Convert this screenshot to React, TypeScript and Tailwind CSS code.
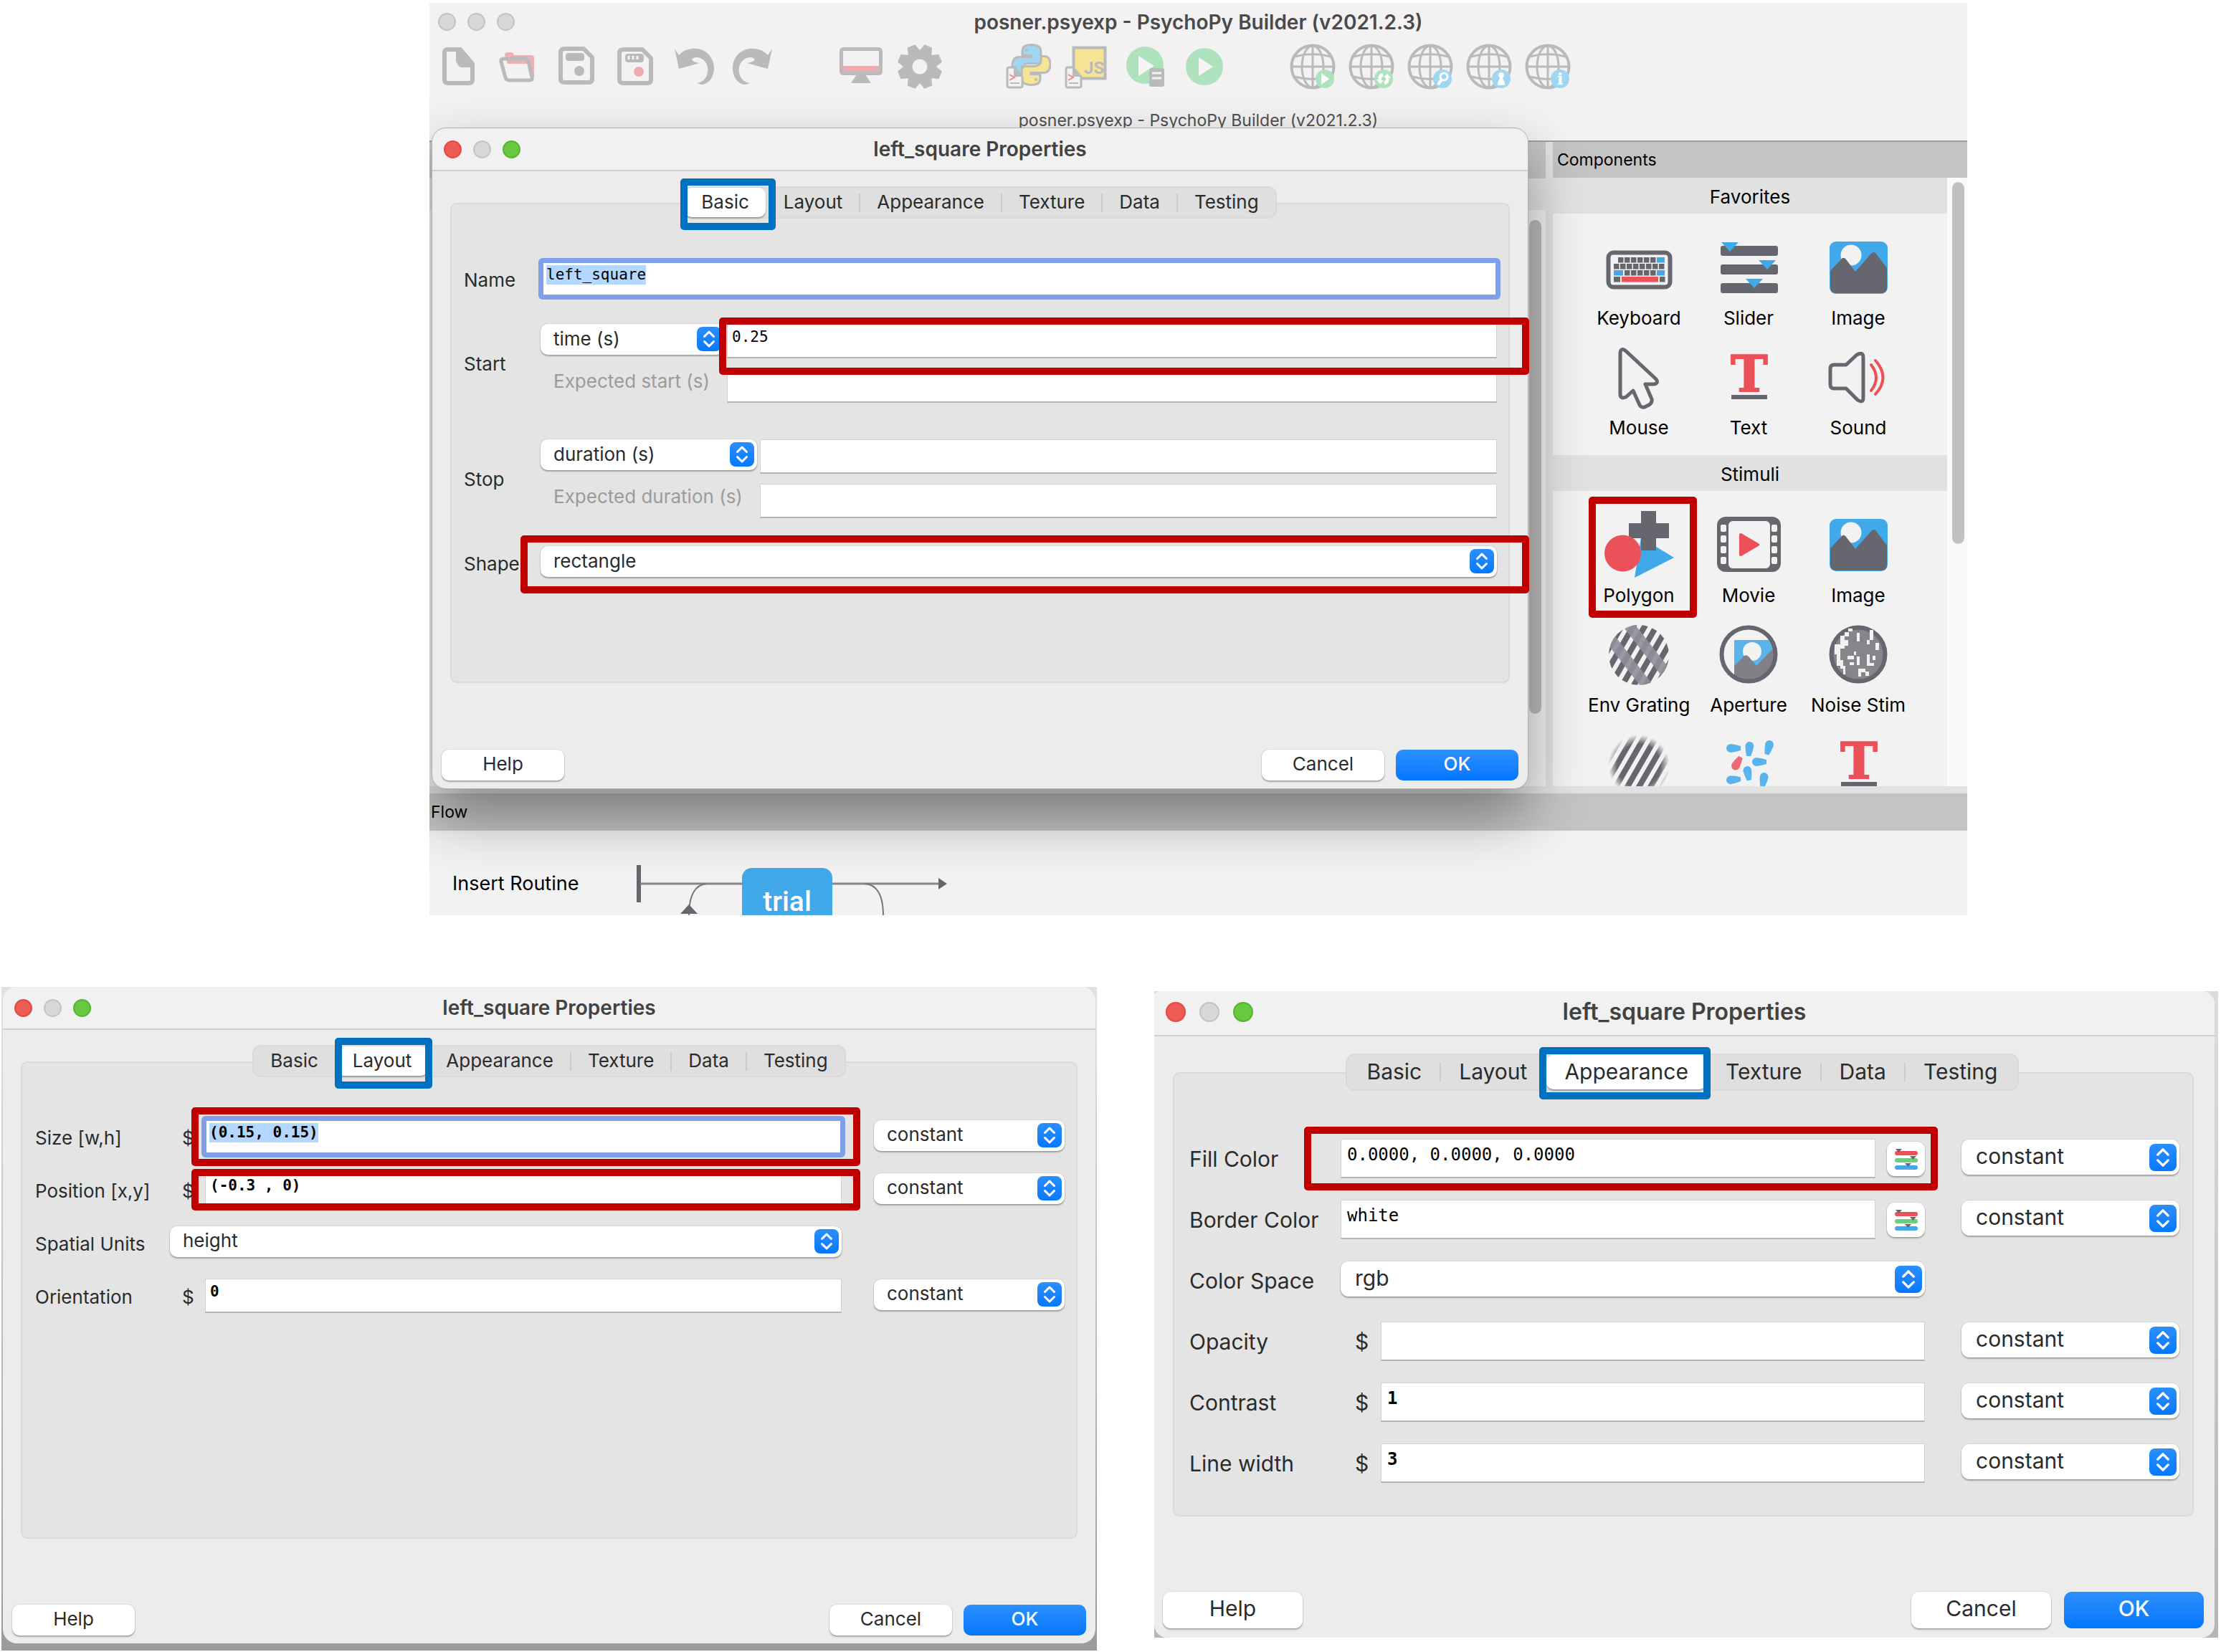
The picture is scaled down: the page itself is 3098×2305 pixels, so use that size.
import type { ReactNode } from "react";

const GREY = "#b9babc";
const INK = "#66666e";
const RED = "#ec5159";
const BLUE = "#41a8ea";

/* ---------- toolbar icons (64 x 64) ---------- */

function Svg64({ children }: { children: ReactNode }) {
  return (
    <svg viewBox="0 0 64 64" className="h-16 w-16" fill="none" aria-hidden="true">
      {children}
    </svg>
  );
}

function NewIcon() {
  return (
    <Svg64>
      <path d="M16 8h18l17 20v22q0 5-5 5H17q-5 0-5-5V13q0-5 4-5z" stroke={GREY} strokeWidth="6" strokeLinejoin="round" />
      <path d="M28 8h8l17 20v5H35q-5-2-7-9z" fill={GREY} />
    </Svg64>
  );
}

function OpenIcon() {
  return (
    <Svg64>
      <path d="M14 16q0-4 4-4h5q3 0 4 4h24q4 0 4 4v28l-7-20H18z" fill="#eeb0b3" />
      <path d="M9 25q-1-4 4-4h29q4 0 5 4l5 22q1 4-3 4H20q-4 0-5-4z" stroke={GREY} strokeWidth="5" strokeLinejoin="round" />
    </Svg64>
  );
}

function SaveIcon() {
  return (
    <Svg64>
      <path d="M16 7h26l12 12v30q0 5-5 5H16q-6 0-6-5V12q0-5 6-5z" stroke={GREY} strokeWidth="6" strokeLinejoin="round" />
      <rect x="17" y="13" width="26" height="11" rx="4" fill={GREY} />
      <circle cx="36" cy="38" r="7" fill={GREY} />
    </Svg64>
  );
}

function SaveAsIcon() {
  return (
    <Svg64>
      <path d="M16 8h26l12 12v30q0 5-5 5H16q-6 0-6-5V13q0-5 6-5z" stroke={GREY} strokeWidth="6" strokeLinejoin="round" />
      <rect x="18" y="14" width="26" height="12" rx="4" fill={GREY} />
      <path d="M23 17v5M29 17v5M35 17v5" stroke="#f3f1f2" strokeWidth="3" />
      <circle cx="37" cy="39" r="7" fill="#eeabaf" />
    </Svg64>
  );
}

const UNDO =
  "M5 7 L11 16 C18 8 28 6 37 7 C52 9 60 22 60 34 C60 47 52 57 42 57 L36 55 C46 54 53 44 51 33 C50 25 43 19 35 19 C32 19 30 21 29 22 Q31 26 40 27 L11 35 Z";

function UndoIcon() {
  return (
    <Svg64>
      <path d={UNDO} fill={GREY} />
    </Svg64>
  );
}

function RedoIcon() {
  return (
    <Svg64>
      <g transform="translate(64 0) scale(-1 1)">
        <path d={UNDO} fill={GREY} />
      </g>
    </Svg64>
  );
}

function MonitorIcon() {
  return (
    <Svg64>
      <rect x="4.500" y="7.500" width="55" height="34" rx="3" stroke={GREY} strokeWidth="5" />
      <rect x="7" y="31" width="50" height="8" fill="#eeabaf" />
      <path d="M26 43h12l8 12H18z" fill={GREY} />
    </Svg64>
  );
}

function GearIcon() {
  return (
    <Svg64>
      <circle cx="32" cy="32" r="17" stroke={GREY} strokeWidth="13" />
      {[22.5, 67.5, 112.5, 157.5, 202.5, 247.5, 292.5, 337.5].map((a) => (
        <path key={a} d="M24 12 L27 2 H37 L40 12 Z" fill={GREY} stroke={GREY} strokeWidth="2" strokeLinejoin="round" transform={`rotate(${a} 32 32)`} />
      ))}
    </Svg64>
  );
}

function ScriptBadge() {
  return (
    <g>
      <path d="M5 33h8l11 13v13q0 2-3 2H5q-2 0-2-3V36q0-3 2-3z" fill="#f3f1f2" stroke={GREY} strokeWidth="3" />
      <path d="M12 32l12 14H12z" fill={GREY} />
      <path d="M6 43l7 4-7 4" stroke="#ee8a90" strokeWidth="2" />
      <path d="M7 55h13" stroke={GREY} strokeWidth="2" />
    </g>
  );
}

function PythonIcon() {
  const body = "M36 1.500c-9 0-12 4-12 9v6h13v2H19c-6 0-9 5-9 12s3 11 8 11h5v-6c0-5 4-8 9-8h12c4 0 6-3 6-7V11c0-6-5-9.500-14-9.500z";
  return (
    <Svg64>
      <path d={body} fill="#f4e493" stroke={GREY} strokeWidth="3" transform="rotate(180 36.500 29.500)" />
      <path d={body} fill="#9fd6f2" stroke={GREY} strokeWidth="3" />
      <circle cx="30" cy="9" r="2" fill={GREY} />
      <circle cx="43" cy="50" r="2" fill={GREY} />
      <ScriptBadge />
    </Svg64>
  );
}

function JsIcon() {
  return (
    <Svg64>
      <rect x="13.500" y="5.500" width="44" height="43" fill="#f4e493" stroke={GREY} strokeWidth="4" />
      <text x="28" y="42" fontSize="24" fontWeight="700" fontFamily="Roboto, sans-serif" fill={GREY}>
        JS
      </text>
      <ScriptBadge />
    </Svg64>
  );
}

function RunSheetIcon() {
  return (
    <Svg64>
      <circle cx="31" cy="30" r="26" fill="#aee2bd" />
      <path d="M22 17l22 14-22 14z" fill="#f6f4f5" />
      <rect x="37" y="34" width="21" height="26" rx="3" fill={GREY} />
      <path d="M41 41h13M41 48h13" stroke="#f3f1f2" strokeWidth="3" />
    </Svg64>
  );
}

function RunIcon() {
  return (
    <Svg64>
      <circle cx="32" cy="32" r="26" fill="#aee2bd" />
      <path d="M24 19l20 13-20 13z" fill="#f6f4f5" />
    </Svg64>
  );
}

type Badge = "play" | "sync" | "search" | "user" | "info";

function GlobeIcon({ badge }: { badge: Badge }) {
  const green = badge === "play" || badge === "sync";
  return (
    <Svg64>
      <g stroke={GREY} strokeWidth="3">
        <circle cx="32" cy="32" r="29.500" strokeWidth="4" />
        <ellipse cx="32" cy="32" rx="15" ry="29" />
        <path d="M32 2v60M2 32h60M7 18q25-7 50 0M7 46q25 7 50 0" />
      </g>
      <circle cx="49" cy="49" r="13" fill={green ? "#aee2bd" : "#9fd6f2"} />
      {badge === "play" && <path d="M44 41l11 8-11 8z" fill="#fff" />}
      {badge === "sync" && (
        <path d="M47 41q-7 2-5 9h-3l5 6 5-5h-3q-1-4 3-6zM51 57q7-2 5-9h3l-5-6-5 5h3q1 4-3 6z" fill="#fff" />
      )}
      {badge === "search" && (
        <g stroke="#fff" strokeWidth="3">
          <circle cx="51" cy="46" r="5" />
          <path d="M48 50l-5 7" strokeWidth="4" />
        </g>
      )}
      {badge === "user" && <path d="M49 40q4 0 4 4 0 2-2 4l3 7q1 3-2 3h-6q-3 0-2-3l3-7q-2-2-2-4 0-4 4-4z" fill="#fff" />}
      {badge === "info" && (
        <text x="49" y="57" textAnchor="middle" fontSize="23" fontWeight="700" fontFamily="'DejaVu Serif', serif" fill="#fff">
          i
        </text>
      )}
    </Svg64>
  );
}

/* ---------- component icons (96 x 96) ---------- */

function Svg96({ children }: { children: ReactNode }) {
  return (
    <svg viewBox="0 0 96 96" className="h-24 w-24 shrink-0 overflow-visible" fill="none" aria-hidden="true">
      {children}
    </svg>
  );
}

function KeyboardIcon() {
  const keys = (y: number, from: number, n: number) =>
    Array.from({ length: n }, (_, i) => <rect key={`${y}-${i}`} x={from + i * 9} y={y} width="7.500" height="7.500" fill={INK} />);
  return (
    <Svg96>
      <rect x="5.500" y="27.500" width="86" height="48" rx="7" stroke={INK} strokeWidth="6" />
      {keys(34, 19, 6)}
      <rect x="73" y="34" width="11" height="7.500" fill={BLUE} />
      {keys(43, 13, 8)}
      <rect x="13" y="52" width="13" height="7.500" fill={BLUE} />
      {keys(52, 28, 5)}
      <rect x="73" y="52" width="11" height="7.500" fill={BLUE} />
      <rect x="13" y="61" width="9" height="7.500" fill={INK} />
      <rect x="24" y="61" width="51" height="7.500" fill={RED} />
      <rect x="77" y="61" width="7.500" height="7.500" fill={INK} />
    </Svg96>
  );
}

function SliderIcon() {
  return (
    <Svg96>
      <rect x="9" y="18" width="80" height="14" rx="3" fill={INK} />
      <rect x="9" y="44" width="80" height="14" rx="3" fill={INK} />
      <rect x="9" y="70" width="80" height="14" rx="3" fill={INK} />
      <path d="M10 13h24L22 26zM62 38h24L74 51zM44 64h24L56 77z" fill={BLUE} />
    </Svg96>
  );
}

function ImageIcon() {
  return (
    <Svg96>
      <rect x="8" y="12" width="81" height="73" rx="9" fill={BLUE} />
      <circle cx="38" cy="31" r="14.500" fill="#f2f2f2" />
      <path d="M9 53L25 36q3-3 6 1L44 54 66 29q4-4 7 0L88 49v27q0 8-8 8H17q-8 0-8-8z" fill={INK} />
    </Svg96>
  );
}

function MouseIcon() {
  return (
    <Svg96>
      <path
        d="M29 11L72 51Q76 57 69 58L57 58 66 79Q67 84 62 87L56 90Q51 91 49 87L40 67 30 76Q22 79 22 72V14Q23 7 29 11Z"
        stroke={INK}
        strokeWidth="5"
        strokeLinejoin="round"
      />
    </Svg96>
  );
}

function TextIcon() {
  return (
    <Svg96>
      <text x="49" y="68" textAnchor="middle" fontSize="69" fontWeight="700" fontFamily="'DejaVu Serif', serif" fill={RED} stroke={RED} strokeWidth="2">
        T
      </text>
      <rect x="24" y="73" width="50" height="6" fill={INK} />
    </Svg96>
  );
}

function SoundIcon() {
  return (
    <Svg96>
      <path d="M14 31h17L46 17q9-5 9 4v56q0 8-8 3L31 64H14q-5 0-5-6V37q0-6 5-6z" stroke={INK} strokeWidth="5" strokeLinejoin="round" />
      <path d="M66 31q14 18 0 36M72 25q21 24 0 47" stroke={RED} strokeWidth="4" strokeLinecap="round" />
    </Svg96>
  );
}

function PolygonIcon() {
  return (
    <Svg96>
      <path d="M51 38L97 66 42 94z" fill={BLUE} />
      <path d="M51 1h21v17h18v21H72v17H51V39H34V18h17z" fill={INK} />
      <circle cx="25.500" cy="60" r="25.500" fill={RED} />
    </Svg96>
  );
}

function MovieIcon() {
  return (
    <Svg96>
      <rect x="4" y="9" width="89" height="77" rx="12" fill={INK} />
      <rect x="20" y="15" width="58" height="66" rx="6" fill="#f2f2f2" />
      {[20, 35, 50, 65].map((y) => (
        <g key={y} fill="#f2f2f2">
          <rect x="9" y={y} width="8" height="10" rx="2" />
          <rect x="80" y={y} width="8" height="10" rx="2" />
        </g>
      ))}
      <path d="M37 34l24 14-24 14z" fill={RED} stroke={RED} strokeWidth="4" strokeLinejoin="round" />
    </Svg96>
  );
}

function EnvGratingIcon() {
  const bars = [-56, -42, -28, -14, 0, 14, 28, 42, 56];
  return (
    <Svg96>
      <clipPath id="env-clip">
        <circle cx="48" cy="49" r="42" />
      </clipPath>
      <g clipPath="url(#env-clip)">
        <g transform="rotate(30 48 49)" fill={INK}>
          {bars.map((x) => (
            <rect key={x} x={45 + x} y="-20" width="8" height="140" />
          ))}
        </g>
        <g transform="rotate(-38 48 49)" fill="#8f8f9b">
          <rect x="23" y="-20" width="15" height="140" opacity="0.9" />
          <rect x="55" y="-20" width="15" height="140" opacity="0.9" />
        </g>
      </g>
    </Svg96>
  );
}

function ApertureIcon() {
  return (
    <Svg96>
      <clipPath id="aperture-clip">
        <circle cx="48" cy="48" r="36" />
      </clipPath>
      <g clipPath="url(#aperture-clip)">
        <rect x="28" y="28" width="60" height="60" fill="#58b4ea" />
        <circle cx="53" cy="44" r="13" fill="#f2f2f2" />
        <path d="M28 64L42 50q3-2 6 1L59 64 84 38V90H28z" fill="#808086" />
      </g>
      <circle cx="48" cy="48" r="37.500" stroke={INK} strokeWidth="6" />
    </Svg96>
  );
}

const NOISE: [number, number, number, number][] = [
  [29, 17, 6, 6], [34, 12, 6, 4], [23, 22, 6, 18], [29, 28, 5, 8], [15, 34, 8, 14], [18, 48, 5, 16], [23, 56, 4, 12],
  [27, 64, 3, 12], [46, 18, 4, 12], [64, 14, 5, 14], [60, 28, 4, 6], [72, 32, 5, 10], [33, 50, 9, 5], [42, 44, 3, 5],
  [46, 51, 4, 12], [36, 59, 6, 4], [60, 48, 4, 16], [64, 60, 6, 4], [68, 50, 4, 6], [48, 68, 10, 5], [48, 73, 4, 6],
  [58, 72, 5, 6],
];

function NoiseIcon() {
  return (
    <Svg96>
      <circle cx="48" cy="48" r="37.500" fill="#85858a" stroke={INK} strokeWidth="6" />
      {NOISE.map(([x, y, w, h]) => (
        <rect key={`${x}-${y}`} x={x} y={y} width={w} height={h} fill="#f2f2f2" />
      ))}
    </Svg96>
  );
}

function GratingIcon() {
  const bars = [-42, -28, -14, 0, 14, 28, 42];
  return (
    <Svg96>
      <radialGradient id="grating-fade">
        <stop offset="0.700" stopColor="#fff" />
        <stop offset="1" stopColor="#000" />
      </radialGradient>
      <mask id="grating-mask">
        <circle cx="48" cy="50" r="43" fill="url(#grating-fade)" />
      </mask>
      <g mask="url(#grating-mask)">
        <g transform="rotate(30 48 50)" fill={INK}>
          {bars.map((x) => (
            <rect key={x} x={45 + x} y="-20" width="8" height="140" />
          ))}
        </g>
      </g>
    </Svg96>
  );
}

const DROPS: [number, number, number, string][] = [
  [27, 26, 0, "#58b4ea"], [49, 27, 95, "#58b4ea"], [76, 25, 105, "#58b4ea"], [32, 47, -60, "#ee6a74"],
  [63, 45, 0, "#58b4ea"], [47, 61, 80, "#58b4ea"], [27, 70, -5, "#58b4ea"], [69, 70, 100, "#58b4ea"],
];

function DotsIcon() {
  return (
    <Svg96>
      {DROPS.map(([x, y, a, fill]) => (
        <path key={`${x}-${y}`} d="M-4-6Q-10-5-10 0T-4 6Q4 5 10 3V-3Q4-5-4-6z" fill={fill} transform={`translate(${x} ${y}) rotate(${a})`} />
      ))}
    </Svg96>
  );
}

function ColorPickerIcon() {
  return (
    <svg viewBox="0 0 34 30" className="h-[30px] w-[34px]" aria-hidden="true">
      <rect x="1" y="4" width="32" height="6" rx="3" fill={RED} />
      <rect x="1" y="14" width="32" height="6" rx="3" fill="#6cce7d" />
      <rect x="1" y="24" width="32" height="6" rx="3" fill={BLUE} />
      <path d="M2 1h9L6.500 6zM22 11h9l-4.500 5zM15 21h9l-4.500 5z" fill={INK} />
    </svg>
  );
}

/* ---------- shared controls ---------- */

function Lights({ active, large, className = "left-4" }: { active: boolean; large?: boolean; className?: string }) {
  const size = large ? "h-7 w-7" : "h-[25px] w-[25px]";
  const idle = "rounded-full border-2 border-[#c3c3c3] bg-[#d7d7d7]";
  return (
    <div className={`absolute inset-y-0 flex items-center ${large ? "gap-[19px] pb-1" : "gap-4"} ${className}`}>
      <button aria-label="Close" className={`${size} ${active ? "rounded-full border-2 border-[#e24b41] bg-[#ec5c54]" : idle}`} />
      <button aria-label="Minimize" className={`${size} ${idle}`} />
      <button aria-label="Zoom" className={`${size} ${active ? "rounded-full border-2 border-[#56b333] bg-[#68c83f]" : idle}`} />
    </div>
  );
}

function Select({ label, value, large, className = "" }: { label: string; value: string; large?: boolean; className?: string }) {
  return (
    <div className={`relative shrink-0 ${className}`}>
      <select
        aria-label={label}
        defaultValue={value}
        className={`w-full appearance-none bg-white text-[#2b2b2b] shadow-[0_0_0_1px_rgba(0,0,0,0.06),0_2px_2px_rgba(0,0,0,0.28)] ${
          large ? "h-[49px] rounded-[11px] pb-1 pl-5 text-[30px] leading-[44px]" : "h-[43px] rounded-[10px] pb-[2px] pl-[18px] text-[26px] leading-[40px]"
        }`}
      >
        <option>{value}</option>
      </select>
      <svg
        viewBox="0 0 34 34"
        aria-hidden="true"
        className={`pointer-events-none absolute rounded-lg bg-linear-to-b from-[#2a8ffc] to-[#0478fe] ${
          large ? "right-1 top-[6px] h-[38px] w-[38px]" : "right-1 top-1 h-[34px] w-[34px]"
        }`}
      >
        <path d="M10.500 13.500L17 7l6.500 6.500M10.500 20.500L17 27l6.500-6.500" fill="none" stroke="#fff" strokeWidth="3" strokeLinecap="round" strokeLinejoin="round" />
      </svg>
    </div>
  );
}

function TextBox({
  label,
  value = "",
  bold,
  selected,
  large,
}: {
  label: string;
  value?: string;
  bold?: boolean;
  selected?: boolean;
  large?: boolean;
}) {
  const font = `font-['DejaVu_Sans_Mono',monospace] text-black ${bold ? "font-bold" : ""} ${large ? "text-[24px]" : "text-[21px]"}`;
  if (selected) {
    return (
      <div className="flex h-12 min-w-0 flex-1 items-start rounded-[2px] border-2 border-[#7f9fe8] bg-white pl-[4px] pt-[3px] ring-[5px] ring-[#7f9fe8]">
        <input aria-label={label} defaultValue={value} className={`h-[27px] bg-[#b3d7ff] outline-none [field-sizing:content] ${font}`} />
      </div>
    );
  }
  return (
    <input
      aria-label={label}
      defaultValue={value}
      className={`min-w-0 flex-1 border border-b-2 border-[#d2d2d2] border-b-[#b4b4b4] bg-white outline-none ${
        large ? "h-[55px] pb-[10px] pl-2" : "h-12 pb-[11px] pl-[6px]"
      } ${font}`}
    />
  );
}

function RedBox({ className }: { className: string }) {
  return <div className={`pointer-events-none absolute z-20 rounded-[5px] border-[10px] border-[#c00000] ${className}`} />;
}

const TABS = ["Basic", "Layout", "Appearance", "Texture", "Data", "Testing"];

function PropertiesDialog({
  active,
  mark,
  large,
  className,
  bodyClass,
  footerClass,
  children,
}: {
  active: string;
  mark: string;
  large?: boolean;
  className: string;
  bodyClass: string;
  footerClass: string;
  children: ReactNode;
}) {
  const at = TABS.indexOf(active);
  const button = `bg-white text-[#2b2b2b] shadow-[0_0_0_1px_rgba(0,0,0,0.06),0_2px_2px_rgba(0,0,0,0.28)] ${
    large ? "h-[51px] w-[195px] rounded-[11px] pb-1 text-[30px]" : "h-[43px] w-[171px] rounded-[10px] pb-1 text-[26px]"
  }`;
  return (
    <section aria-label="left_square Properties" className={`bg-[#ececec] text-[#2b2b2b] ${className}`}>
      <header
        className={`relative flex items-center justify-center rounded-t-[inherit] border-b-2 border-[#cfcfcf] bg-[#f2f1f1] font-semibold text-[#424242] ${
          large ? "h-[63px] pb-1 text-[32px]" : "h-[60px] text-[28px]"
        }`}
      >
        <Lights active large={large} />
        left_square Properties
      </header>
      <div className={`relative z-10 flex justify-center ${large ? "-mb-[26px] mt-6 pr-[6px] text-[30px]" : "-mb-[22px] mt-[21px] text-[26px]"}`}>
        <div
          role="tablist"
          className={`flex items-center border-2 border-[#d9d9d9] bg-[#dfdfdf] ${large ? "h-[52px] rounded-[13px] px-[3px]" : "h-[45px] rounded-[12px]"}`}
        >
          {TABS.map((tab, i) => (
            <div key={tab} className="relative flex h-full items-center">
              {i > 0 && <span className={`h-[26px] w-[2px] ${i === at || i === at + 1 ? "" : "bg-[#cbcbcb]"}`} />}
              <button
                role="tab"
                aria-selected={tab === active}
                className={`h-full pb-[2px] ${large ? "px-[25px]" : "px-[23px]"} ${
                  tab === active ? "rounded-[10px] bg-white shadow-[0_2px_2px_rgba(0,0,0,0.3)]" : ""
                }`}
              >
                {tab}
              </button>
              {tab === active && <div className={`pointer-events-none absolute rounded-[5px] border-[10px] border-[#0070c0] ${mark}`} />}
            </div>
          ))}
        </div>
      </div>
      <div
        className={`rounded-[9px] border-2 border-[#dadada] bg-[#e4e4e4] ${large ? "ml-[26px] mr-[29px] text-[30px]" : "mx-[25px] text-[26px]"} ${bodyClass}`}
      >
        {children}
      </div>
      <footer className={`flex ${footerClass} ${large ? "gap-[18px] pl-3 pr-[15px]" : "gap-4 px-[13px]"}`}>
        <button className={`mr-auto ${button}`}>Help</button>
        <button className={button}>Cancel</button>
        <button
          className={`bg-linear-to-b from-[#2b8ffc] to-[#0077ff] font-medium text-white ${
            large ? "h-[51px] w-[195px] rounded-[11px] pb-1 text-[30px]" : "h-[43px] w-[171px] rounded-[10px] pb-1 text-[26px]"
          }`}
        >
          OK
        </button>
      </footer>
    </section>
  );
}

/* ---------- dialog bodies ---------- */

function TimingRows({ name, unit, expected, value, width, marked }: { name: string; unit: string; expected: string; value?: string; width: string; marked?: boolean }) {
  return (
    <div className="flex items-center">
      <span className="w-[107px] shrink-0">{name}</span>
      <div className="flex flex-1 flex-col gap-[14px]">
        <div className="flex gap-1">
          <Select label={`${name} type`} value={unit} className={width} />
          <div className="relative flex flex-1">
            <TextBox label={name} value={value} />
            {marked && <RedBox className="-bottom-[23px] -left-[11px] -right-[45px] -top-[9px]" />}
          </div>
        </div>
        <div className="flex gap-1">
          <span className={`h-12 shrink-0 whitespace-nowrap pl-[18px] leading-9 text-[#9b9b9b] ${width}`}>{expected}</span>
          <TextBox label={expected} />
        </div>
      </div>
    </div>
  );
}

function BasicFields() {
  return (
    <>
      <div className="flex items-center">
        <span className="w-[109px] shrink-0 pt-[2px]">Name</span>
        <TextBox label="Name" value="left_square" selected />
      </div>
      <div className="mt-[39px]">
        <TimingRows name="Start" unit="time (s)" expected="Expected start (s)" value="0.25" width="w-[256px]" marked />
      </div>
      <div className="mt-[51px]">
        <TimingRows name="Stop" unit="duration (s)" expected="Expected duration (s)" width="w-[302px]" />
      </div>
      <div className="mt-[39px] flex">
        <span className="w-[107px] shrink-0 pt-[5px]">Shape</span>
        <div className="relative flex-1">
          <Select label="Shape" value="rectangle" />
          <RedBox className="-bottom-[22px] -left-[28px] -right-[45px] -top-[15px]" />
        </div>
      </div>
    </>
  );
}

function LayoutRow({ name, children, constant = true }: { name: string; children: ReactNode; constant?: boolean }) {
  return (
    <div className="flex h-[74px] items-center">
      <span className="w-[188px] shrink-0 pt-[2px]">{name}</span>
      <div className="relative flex min-w-0 flex-1 items-center">{children}</div>
      <div className="ml-[45px] w-[266px] shrink-0 pb-1">{constant && <Select label={`${name} updates`} value="constant" />}</div>
    </div>
  );
}

function LayoutFields() {
  const dollar = <span className="w-[49px] shrink-0 pl-[17px] pt-[2px]">$</span>;
  return (
    <>
      <LayoutRow name="Size [w,h]">
        {dollar}
        <TextBox label="Size [w,h]" value="(0.15, 0.15)" bold selected />
        <RedBox className="-bottom-[17px] -right-[26px] -top-[17px] left-[30px]" />
      </LayoutRow>
      <LayoutRow name="Position [x,y]">
        {dollar}
        <TextBox label="Position [x,y]" value="(-0.3 , 0)" bold />
        <RedBox className="-bottom-[5px] -right-[26px] -top-[5px] left-[30px]" />
      </LayoutRow>
      <LayoutRow name="Spatial Units" constant={false}>
        <Select label="Spatial Units" value="height" className="mb-1 flex-1" />
      </LayoutRow>
      <LayoutRow name="Orientation">
        {dollar}
        <TextBox label="Orientation" value="0" bold />
      </LayoutRow>
    </>
  );
}

function AppearanceRow({ name, children, constant = true }: { name: string; children: ReactNode; constant?: boolean }) {
  return (
    <div className="flex h-[85px] items-center">
      <span className="w-[211px] shrink-0 pt-[2px]">{name}</span>
      <div className="relative flex min-w-0 flex-1 items-center">{children}</div>
      <div className="ml-[51px] w-[304px] shrink-0 pb-1">{constant && <Select label={`${name} updates`} value="constant" large />}</div>
    </div>
  );
}

function ColorField({ name, value }: { name: string; value: string }) {
  return (
    <>
      <TextBox label={name} value={value} large />
      <button
        aria-label={`Pick ${name}`}
        className="ml-4 flex h-12 w-[53px] items-center justify-center rounded-[11px] bg-white shadow-[0_0_0_1px_rgba(0,0,0,0.06),0_2px_2px_rgba(0,0,0,0.28)]"
      >
        <ColorPickerIcon />
      </button>
    </>
  );
}

function AppearanceFields() {
  return (
    <>
      <AppearanceRow name="Fill Color">
        <ColorField name="Fill Color" value="0.0000, 0.0000, 0.0000" />
        <RedBox className="-bottom-[17px] -left-[51px] -right-[18px] -top-[17px]" />
      </AppearanceRow>
      <AppearanceRow name="Border Color">
        <ColorField name="Border Color" value="white" />
      </AppearanceRow>
      <AppearanceRow name="Color Space" constant={false}>
        <Select label="Color Space" value="rgb" large className="mb-1 flex-1" />
      </AppearanceRow>
      {[
        ["Opacity", ""],
        ["Contrast", "1"],
        ["Line width", "3"],
      ].map(([name, value]) => (
        <AppearanceRow key={name} name={name}>
          <span className="w-14 shrink-0 pl-5 pt-[2px]">$</span>
          <TextBox label={name} value={value} bold large />
        </AppearanceRow>
      ))}
    </>
  );
}

/* ---------- builder window ---------- */

function ToolGroup({ items }: { items: [string, ReactNode][] }) {
  return (
    <div className="flex">
      {items.map(([name, icon]) => (
        <button key={name} aria-label={name} className="flex w-[82px] justify-center">
          {icon}
        </button>
      ))}
    </div>
  );
}

function Toolbar() {
  return (
    <div className="flex gap-[69px]">
      <ToolGroup
        items={[
          ["New", <NewIcon />],
          ["Open", <OpenIcon />],
          ["Save", <SaveIcon />],
          ["Save as", <SaveAsIcon />],
          ["Undo", <UndoIcon />],
          ["Redo", <RedoIcon />],
        ]}
      />
      <ToolGroup
        items={[
          ["Monitor Center", <MonitorIcon />],
          ["Experiment settings", <GearIcon />],
        ]}
      />
      <ToolGroup
        items={[
          ["Compile to Python", <PythonIcon />],
          ["Compile to JS", <JsIcon />],
          ["Send to runner", <RunSheetIcon />],
          ["Run", <RunIcon />],
        ]}
      />
      <ToolGroup
        items={[
          ["Run online", <GlobeIcon badge="play" />],
          ["Sync online", <GlobeIcon badge="sync" />],
          ["Search online", <GlobeIcon badge="search" />],
          ["Log in", <GlobeIcon badge="user" />],
          ["Project info", <GlobeIcon badge="info" />],
        ]}
      />
    </div>
  );
}

function ComponentSection({ title, items, marked }: { title: string; items: [string, ReactNode][]; marked?: string }) {
  return (
    <div>
      <h3 className="flex h-[50px] items-center justify-center bg-[#e2e2e2] pt-[2px] text-[26px]">{title}</h3>
      <div className="grid grid-cols-[repeat(3,153px)] justify-center bg-[#f2f2f2] pb-1 pr-1 pt-[27px]">
        {items.map(([name, icon], i) => (
          <button key={i} className="relative flex h-[153px] flex-col items-center">
            {icon}
            <span className="w-[142px] overflow-hidden whitespace-nowrap text-center text-[26px] leading-[46px]">{name}</span>
            {name === marked && <RedBox className="-top-[19px] bottom-[3px] left-[6px] right-[-4px]" />}
          </button>
        ))}
      </div>
    </div>
  );
}

function BuilderWindow() {
  return (
    <main className="relative overflow-hidden bg-[#f2f2f2] text-black">
      <div className="h-[194px] border-b-2 border-[#9f9f9f] bg-[#f3f1f2]">
        <header className="relative flex h-[53px] items-center justify-center text-[28px] font-semibold text-[#4a4a4a]">
          <Lights active={false} className="left-3" />
          posner.psyexp - PsychoPy Builder (v2021.2.3)
        </header>
        <div className="pt-1">
          <Toolbar />
        </div>
        <p className="mt-[29px] text-center text-[23px] leading-7 text-[#4f4f4f]">posner.psyexp - PsychoPy Builder (v2021.2.3)</p>
      </div>

      <div className="flex h-[899px]">
        <div className="flex-1 bg-[#f2f2f2]">
          <div className="h-[51px] bg-[#c4c4c4]" />
          <div className="h-11 bg-[#e2e2e2]" />
          <div className="flex h-[804px] justify-end pt-[14px]">
            <div className="mr-[6px] h-[689px] w-[17px] rounded-full bg-[#bcbcbc]" />
          </div>
        </div>
        <div className="w-[10px] bg-[#e2e2e2]" />
        <aside className="flex w-[578px] flex-col">
          <h2 className="flex h-[50px] shrink-0 items-center bg-[#c4c4c4] pl-[6px] text-[23px]">Components</h2>
          <div className="flex min-h-0 flex-1">
            <div className="flex-1 overflow-hidden">
              <ComponentSection
                title="Favorites"
                items={[
                  ["Keyboard", <KeyboardIcon />],
                  ["Slider", <SliderIcon />],
                  ["Image", <ImageIcon />],
                  ["Mouse", <MouseIcon />],
                  ["Text", <TextIcon />],
                  ["Sound", <SoundIcon />],
                ]}
              />
              <ComponentSection
                title="Stimuli"
                marked="Polygon"
                items={[
                  ["Polygon", <PolygonIcon />],
                  ["Movie", <MovieIcon />],
                  ["Image", <ImageIcon />],
                  ["Env Grating", <EnvGratingIcon />],
                  ["Aperture", <ApertureIcon />],
                  ["Noise Stim", <NoiseIcon />],
                  ["", <GratingIcon />],
                  ["", <DotsIcon />],
                  ["", <TextIcon />],
                ]}
              />
            </div>
            <div className="w-7 bg-[#fafafa] pl-[7px] pt-[6px]">
              <div className="h-[505px] w-[17px] rounded-full bg-[#c1c1c1]" />
            </div>
          </div>
        </aside>
      </div>

      <div className="h-[10px] bg-[#e2e2e2]" />
      <h2 className="flex h-[52px] items-center bg-[#c4c4c4] pl-[2px] text-[23px]">Flow</h2>
      <div className="flex h-[118px] overflow-hidden bg-[#f2f2f2] pl-8">
        <button className="w-[250px] self-start pt-12 text-left text-[27px] leading-[52px]">Insert Routine</button>
        <svg viewBox="0 0 450 118" className="h-[118px] w-[450px]" fill="none" aria-hidden="true">
          <rect x="7" y="48" width="6" height="52" fill={INK} />
          <path d="M12 74H430" stroke="#85858b" strokeWidth="3" />
          <path d="M428 66l12 8-12 8z" fill={INK} />
          <path d="M104 74C88 76 80 90 80 118M326 74C344 76 351 92 351 118" stroke="#77777e" strokeWidth="2" />
          <path d="M80 103l12 13H68z" fill={INK} />
          <rect x="154" y="52" width="126" height="90" rx="14" fill={BLUE} />
          <text x="217" y="112" textAnchor="middle" fontSize="39" fontWeight="500" fontFamily="Roboto, sans-serif" fill="#fff">
            trial
          </text>
        </svg>
      </div>

      <PropertiesDialog
        active="Basic"
        mark="-left-[6px] -right-[14px] -top-[13px] -bottom-[18px]"
        className="absolute left-[3px] right-[612px] top-[174px] rounded-[20px] border border-[#b0b0b0] shadow-[0_38px_80px_rgba(0,0,0,0.38)]"
        bodyClass="pb-[145px] pl-[17px] pr-4 pt-[80px]"
        footerClass="pb-[11px] pt-[93px]"
      >
        <BasicFields />
      </PropertiesDialog>
    </main>
  );
}

export default function App() {
  return (
    <div className="min-h-screen overflow-hidden bg-white pt-1 font-['Inter','Liberation_Sans',sans-serif] antialiased">
      <div className="grid grid-cols-[599fr_2145fr_354fr]">
        <div className="col-start-2">
          <BuilderWindow />
        </div>
      </div>

      <div className="mt-[100px] grid grid-cols-[2fr_1528fr_80fr_1484fr_4fr] items-start">
        <div className="col-start-2 bg-linear-to-b from-[#e2e2e2] to-[#9b9b9b] px-[2px] pb-[10px]">
          <PropertiesDialog
            active="Layout"
            mark="-right-[6px] left-0 -top-[12px] -bottom-[18px]"
            className="rounded-[20px]"
            bodyClass="pb-[300px] pl-[18px] pr-4 pt-[66px]"
            footerClass="pb-[11px] pt-[92px]"
          >
            <LayoutFields />
          </PropertiesDialog>
        </div>
        <div className="col-start-4 mt-[6px] bg-linear-to-b from-[#dcdcdc] to-[#b5b5b5] pr-[5px]">
          <PropertiesDialog
            active="Appearance"
            large
            mark="-left-[8px] -right-[6px] -top-[11px] -bottom-[14px]"
            className="rounded-[18px] rounded-tl-[8px]"
            bodyClass="pb-[30px] pl-[21px] pr-[18px] pt-[76px]"
            footerClass="pb-[13px] pt-[105px]"
          >
            <AppearanceFields />
          </PropertiesDialog>
        </div>
      </div>
    </div>
  );
}
